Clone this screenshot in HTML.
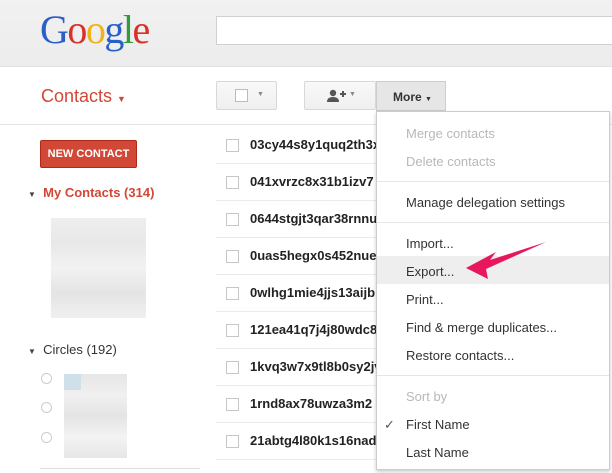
<!DOCTYPE html>
<html><head><style>
*{margin:0;padding:0;box-sizing:border-box}
body{width:612px;height:473px;overflow:hidden;background:#fff;font-family:"Liberation Sans",Arial,sans-serif;position:relative}
.a{position:absolute}
.hdr{left:0;top:0;width:612px;height:67px;background:linear-gradient(#f1f1f1,#ececec);border-bottom:1px solid #e2e2e2}
.logo{left:40px;top:6px;font-family:"Liberation Serif",serif;font-size:40px;letter-spacing:-1.5px}
.btn{border:1px solid #d8d8d8;border-radius:2px;background:linear-gradient(#f8f8f8,#f0f0f0)}
.row{left:216px;width:160px;height:37px;border-bottom:1px solid #ebebeb;font-size:13px;font-weight:bold;color:#222;white-space:nowrap;overflow:hidden}
.row i{position:absolute;left:10px;top:12px;width:13px;height:13px;border:1px solid #c6c6c6;background:#fff}
.row span{position:absolute;left:34px;top:10px}
.menu{left:376px;top:111px;width:234px;height:359px;background:#fff;border:1px solid #ccc;box-shadow:0 2px 4px rgba(0,0,0,.2)}
.mi{position:absolute;left:29px;font-size:13px;color:#333}
.dis{color:#b8b8b8}
.sep{position:absolute;left:0;width:232px;border-top:1px solid #e5e5e5}
</style></head><body>
<div class="a hdr"></div>
<div class="a logo"><span style="color:#2a5fc7">G</span><span style="color:#d8312a">o</span><span style="color:#f0b418">o</span><span style="color:#2a5fc7">g</span><span style="color:#2f9c3c">l</span><span style="color:#d8312a">e</span></div>
<div class="a" style="left:216px;top:16px;width:400px;height:29px;background:#fff;border:1px solid #d0d0d0"></div>
<div class="a" style="left:41px;top:86px;font-size:18px;color:#d14836">Contacts <span style="font-size:9px">▼</span></div>
<div class="a btn" style="left:216px;top:81px;width:61px;height:29px"><i class="a" style="left:18px;top:7px;width:13px;height:13px;border:1px solid #bbb;background:#fff"></i><span class="a" style="left:40px;top:9px;font-size:7px;color:#888">▼</span></div>
<div class="a btn" style="left:304px;top:81px;width:72px;height:29px"><svg class="a" style="left:22px;top:7px" width="20" height="14"><circle cx="6" cy="4" r="3.2" fill="#555"/><path d="M0 13 Q0 8 6 8 Q12 8 12 13Z" fill="#555"/><path d="M13 5h6M16 2v6" stroke="#555" stroke-width="2"/></svg><span class="a" style="left:44px;top:9px;font-size:7px;color:#888">▼</span></div>
<div class="a" style="left:376px;top:81px;width:70px;height:30px;background:#e6e6e6;border:1px solid #ccc;font-size:12px;font-weight:bold;color:#333;padding:8px 0 0 16px">More <span style="font-size:7px">▼</span></div>
<div class="a" style="left:0;top:124px;width:612px;border-top:1px solid #e5e5e5"></div>
<div class="a" style="left:40px;top:140px;width:97px;height:28px;background:#d14836;border:1px solid #b0281a;border-radius:2px;color:#fff;font-size:11px;font-weight:bold;text-align:center;line-height:26px">NEW CONTACT</div>
<div class="a" style="left:28px;top:185px;font-size:13px;font-weight:bold;color:#d14836"><span style="font-size:8px;color:#444">▼</span>&nbsp; My Contacts (314)</div>
<div class="a" style="left:51px;top:218px;width:95px;height:100px;background:linear-gradient(#eee,#e8e8e8,#f2f2f2,#e4e4e4,#f0f0f0)"></div>
<div class="a" style="left:28px;top:342px;font-size:13px;color:#333"><span style="font-size:8px;color:#444">▼</span>&nbsp; Circles (192)</div>
<div class="a" style="left:41px;top:373px;width:11px;height:11px;border:1px solid #ccc;border-radius:50%"></div>
<div class="a" style="left:41px;top:402px;width:11px;height:11px;border:1px solid #ccc;border-radius:50%"></div>
<div class="a" style="left:41px;top:432px;width:11px;height:11px;border:1px solid #ccc;border-radius:50%"></div>
<div class="a" style="left:64px;top:374px;width:63px;height:84px;background:linear-gradient(#e6e6e6,#f0f0f0,#e4e4e4,#f3f3f3,#e6e6e6)"></div>
<div class="a" style="left:64px;top:374px;width:17px;height:16px;background:#cfe0ea"></div>
<div class="a" style="left:40px;top:468px;width:160px;border-top:1px solid #ddd"></div>
<div class="a row" style="top:127px"><i></i><span>03cy44s8y1quq2th3x</span></div>
<div class="a row" style="top:164px"><i></i><span>041xvrzc8x31b1izv7</span></div>
<div class="a row" style="top:201px"><i></i><span>0644stgjt3qar38rnnu</span></div>
<div class="a row" style="top:238px"><i></i><span>0uas5hegx0s452nue</span></div>
<div class="a row" style="top:275px"><i></i><span>0wlhg1mie4jjs13aijb</span></div>
<div class="a row" style="top:312px"><i></i><span>121ea41q7j4j80wdc8</span></div>
<div class="a row" style="top:349px"><i></i><span>1kvq3w7x9tl8b0sy2jv</span></div>
<div class="a row" style="top:386px"><i></i><span>1rnd8ax78uwza3m2</span></div>
<div class="a row" style="top:423px"><i></i><span>21abtg4l80k1s16nad</span></div>
<div class="a menu">
<div class="mi dis" style="top:14px">Merge contacts</div>
<div class="mi dis" style="top:42px">Delete contacts</div>
<div class="sep" style="top:69px"></div>
<div class="mi" style="top:83px">Manage delegation settings</div>
<div class="sep" style="top:110px"></div>
<div class="mi" style="top:124px">Import...</div>
<div style="position:absolute;left:0;top:144px;width:232px;height:28px;background:#eee"></div>
<div class="mi" style="top:152px">Export...</div>
<div class="mi" style="top:180px">Print...</div>
<div class="mi" style="top:208px">Find &amp; merge duplicates...</div>
<div class="mi" style="top:236px">Restore contacts...</div>
<div class="sep" style="top:263px"></div>
<div class="mi dis" style="top:277px">Sort by</div>
<div class="mi" style="top:305px;left:7px;color:#555">✓</div>
<div class="mi" style="top:305px">First Name</div>
<div class="mi" style="top:333px">Last Name</div>
</div>
<svg class="a" style="left:460px;top:238px" width="90" height="50"><path d="M86 4 L30 22 L36 14 L6 30 L28 41 L26 31 Z" fill="#e8175d"/></svg>
</body></html>
